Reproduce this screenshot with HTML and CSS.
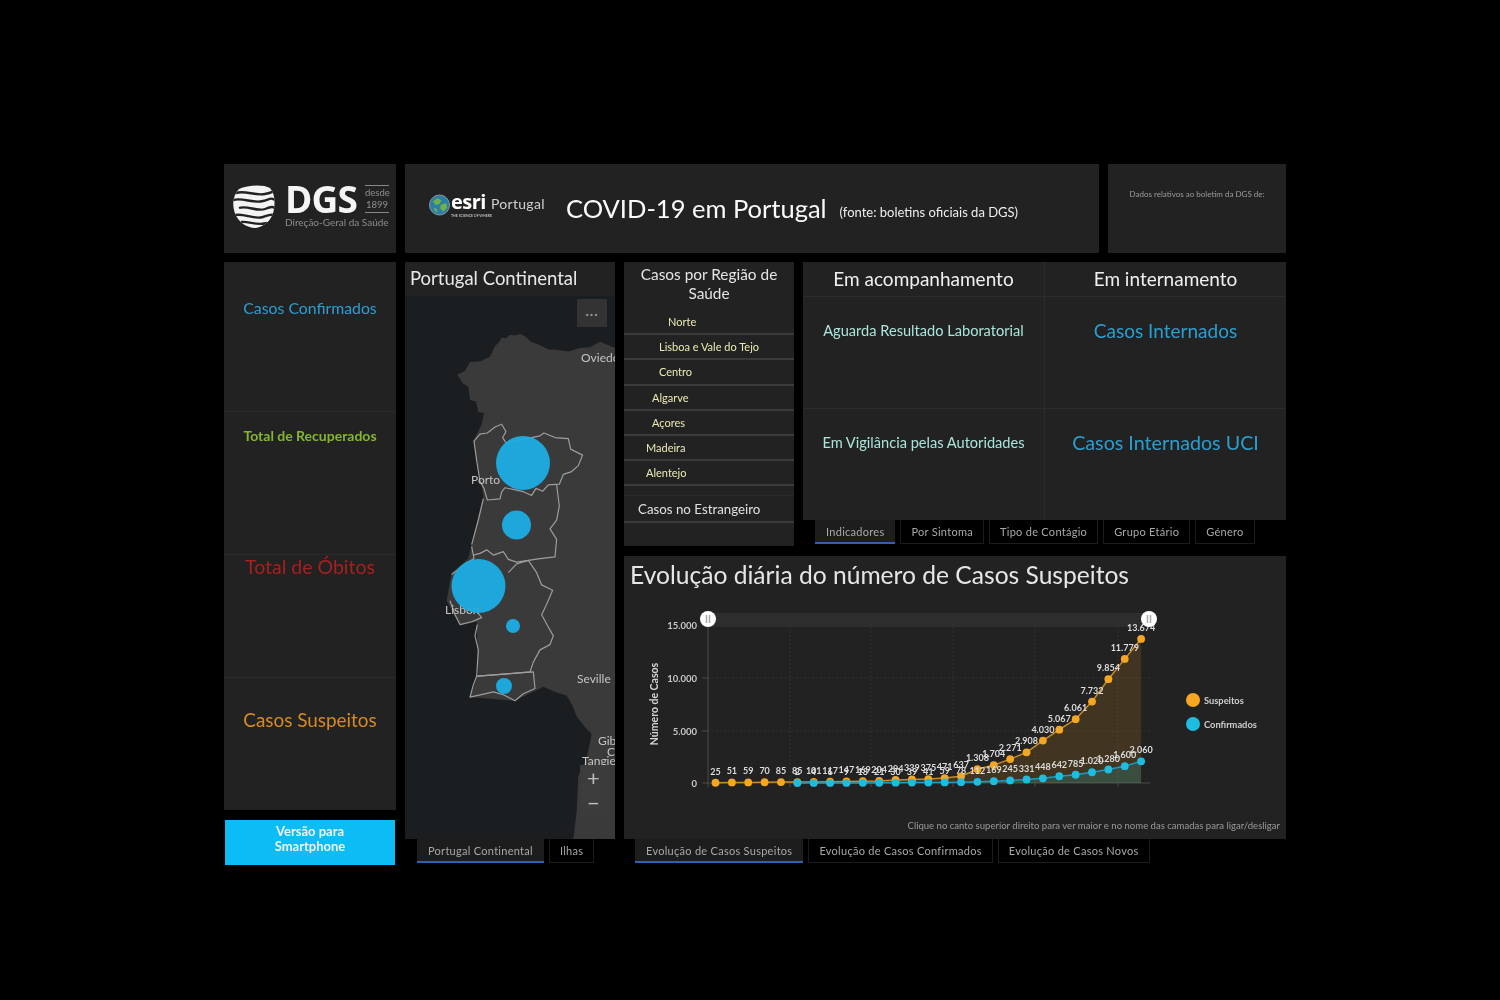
FILE: index.html
```html
<!DOCTYPE html>
<html lang="pt">
<head>
<meta charset="utf-8">
<title>COVID-19 em Portugal</title>
<link rel="stylesheet" href="styles.css">
</head>
<body>
<main class="dash">
  <section class="top-row">
    <div class="panel dgs">
      <svg class="dgs-globe" viewBox="0 0 42 43" aria-hidden="true">
        <defs><clipPath id="gc"><path d="M6 4C14 0 30-1 37 3 42 9 42 17 41 24 40 33 33 41 23 43 12 43 3 35 1 25-1 17 1 9 6 4Z"/></clipPath></defs>
        <g clip-path="url(#gc)">
          <rect width="42" height="43" fill="#f4f4f4"/>
          <path class="dgs-gap" d="M3 8C12 5 22 11 32 9S38 6 42 7"/>
          <path class="dgs-gap" d="M0 15C10 12 20 19 30 16S38 13 42 15"/>
          <path class="dgs-gap" d="M6 23C14 20 24 27 32 24S40 22 42 23"/>
          <path class="dgs-gap" d="M2 30C12 28 20 35 30 32S38 29 42 30"/>
          <path class="dgs-gap" d="M8 37C16 36 24 41 34 38"/>
        </g>
      </svg>
      <div class="dgs-text">
        <div class="dgs-main">
          <span class="dgs-name">DGS</span>
          <span class="dgs-since">desde<br>1899</span>
        </div>
        <div class="dgs-sub">Direção-Geral da Saúde</div>
      </div>
    </div>
    <header class="panel head">
      <div class="esri">
        <svg class="esri-globe" viewBox="0 0 22 22" aria-hidden="true">
          <circle cx="11" cy="11" r="10.500" fill="#2b7fa6" stroke="#8d9aa0" stroke-width="1"/>
          <path d="M4 7l5-3 4 2-2 4-4 1zM12 11l6-2 1 5-4 4-3-3zM5 14l3 1 1 4-3-2z" fill="#6fb04a"/>
        </svg>
        <div class="esri-word">
          <div class="esri-line"><span class="esri-name">esri</span><span class="esri-country">Portugal</span></div>
          <div class="esri-tag">THE SCIENCE OF WHERE</div>
        </div>
      </div>
      <h1 class="head-title">COVID-19 em Portugal</h1>
      <span class="head-source">(fonte: boletins oficiais da DGS)</span>
    </header>
    <div class="panel info">Dados relativos ao boletim da DGS de:</div>
  </section>

  <section class="main-row">
    <div class="col-kpi">
      <div class="panel kpis">
        <div class="kpi kpi-a"><span class="t-conf">Casos Confirmados</span></div>
        <div class="kpi kpi-b"><span class="t-rec">Total de Recuperados</span></div>
        <div class="kpi kpi-c"><span class="t-obi">Total de Óbitos</span></div>
        <div class="kpi kpi-d"><span class="t-sus">Casos Suspeitos</span></div>
      </div>
      <a class="phone-btn">Versão para Smartphone</a>
    </div>

    <div class="col-map">
      <div class="panel map-panel">
        <h2 class="map-title">Portugal Continental</h2>
        <div class="map">
          <svg class="map-svg" viewBox="405 296 210 543">
            <rect x="405" y="296" width="210" height="543" fill="#1b1e21"/>
            <g transform="translate(400 320) scale(.3333 .3509)">
              <path class="land" d="M300 60L305 50 318 52 330 42 345 44 362 40 380 50 392 62 420 72 445 84 470 85 505 90 540 80 570 78 600 62 625 72 660 85V1480H520L530 1400 535 1300 560 1250 575 1180 555 1160 530 1130 518 1100 500 1070 465 1060 430 1045 345 1085 210 1075 235 1010 230 860 180 870 140 800 155 720 205 680 215 640 250 500 245 470 220 345 245 298 252 265 235 262 228 232 210 228 205 190 188 180 172 155 195 145 210 120 240 118 270 105 285 75Z"/>
              <path class="region" d="M222 345L240 325 262 322 285 305 305 297 318 318 308 335 318 350 420 330 432 322 465 335 505 338 512 368 548 385 535 415 515 432 490 440 478 468 445 470 428 488 408 480 395 500 372 490 350 485 315 478 305 490 300 510 262 513 252 480 240 460 230 400Z"/>
              <path class="region" d="M250 510L235 570 215 640M470 470L478 530 470 570 450 595 470 625 465 675 420 680 385 685 350 690 325 682 310 660 280 670 260 655 240 665 220 670"/>
              <path class="region" d="M215 645L222 680 205 690 155 725M150 800L165 840 180 868 215 860 245 848 225 825"/>
              <path class="region" d="M325 720L350 695 385 685 410 720 425 755 458 770 440 810 425 840 442 870 460 900 450 925 420 940 400 975 390 1003 330 1008 230 1015 235 940 225 900 232 868"/>
              <path class="region" d="M230 1015L330 1008 400 1003 405 1050 370 1065 345 1085 310 1068 280 1060 210 1075 220 1040Z"/>
            </g>
            <text class="map-label" x="581" y="362">Oviedo</text>
            <text class="map-label" x="471" y="484">Porto</text>
            <text class="map-label" x="445" y="614">Lisbon</text>
            <text class="map-label" x="577" y="683">Seville</text>
            <text class="map-label" x="598" y="745">Gibraltar</text>
            <text class="map-label" x="607" y="756">Ceuta</text>
            <text class="map-label" x="582" y="765">Tangier</text>
            <circle class="bubble" cx="523" cy="463" r="27"/>
            <circle class="bubble" cx="516.500" cy="525" r="14.500"/>
            <circle class="bubble" cx="478.500" cy="586" r="27"/>
            <circle class="bubble" cx="513" cy="626" r="7"/>
            <circle class="bubble" cx="504" cy="686" r="8"/>
          </svg>
          <button class="map-more">···</button>
          <div class="map-zoom"><span>+</span><span>−</span></div>
        </div>
      </div>
      <nav class="tabs tabs-map">
        <span class="tab tab-on">Portugal Continental</span>
        <span class="tab">Ilhas</span>
      </nav>
    </div>

    <div class="col-right">
      <div class="upper">
        <div class="panel regions">
          <h2 class="regions-title">Casos por Região de Saúde</h2>
          <div class="reg reg-1">Norte</div>
          <div class="reg reg-2">Lisboa e Vale do Tejo</div>
          <div class="reg reg-2">Centro</div>
          <div class="reg reg-3">Algarve</div>
          <div class="reg reg-3">Açores</div>
          <div class="reg reg-4">Madeira</div>
          <div class="reg reg-4">Alentejo</div>
          <div class="reg-gap"></div>
          <div class="reg-abroad">Casos no Estrangeiro</div>
        </div>
        <div class="ind-col">
          <div class="panel ind">
            <div class="ind-head ind-l">Em acompanhamento</div>
            <div class="ind-head">Em internamento</div>
            <div class="ind-cell ind-l ind-b t-pale">Aguarda Resultado Laboratorial</div>
            <div class="ind-cell ind-b t-blue-m">Casos Internados</div>
            <div class="ind-cell ind-l t-pale">Em Vigilância pelas Autoridades</div>
            <div class="ind-cell t-blue-l">Casos Internados UCI</div>
          </div>
          <nav class="tabs tabs-ind">
            <span class="tab tab-on">Indicadores</span>
            <span class="tab">Por Sintoma</span>
            <span class="tab">Tipo de Contágio</span>
            <span class="tab">Grupo Etário</span>
            <span class="tab">Género</span>
          </nav>
        </div>
      </div>
      <div class="chart-col">
        <div class="panel chart">
          <h2 class="chart-title">Evolução diária do número de Casos Suspeitos</h2>
          <svg id="trend" class="chart-svg" viewBox="624 556 662 283"></svg>
        </div>
        <nav class="tabs tabs-chart">
          <span class="tab tab-on">Evolução de Casos Suspeitos</span>
          <span class="tab">Evolução de Casos Confirmados</span>
          <span class="tab">Evolução de Casos Novos</span>
        </nav>
      </div>
    </div>
  </section>
</main>
<script src="chart.js"></script>
</body>
</html>
```
FILE: styles.css
```css
* { box-sizing: border-box; }
html, body { margin: 0; height: 100%; background: #000; overflow: hidden; }
body { font-family: Lato, "Open Sans", sans-serif; color: #eee; }
h1, h2 { margin: 0; font-weight: 400; }

.dash { width: 1062px; margin: 164px 0 0 224px; display: flex; flex-direction: column; gap: 9px; filter: blur(.5px); }
.panel { background: #222; }

.top-row { display: flex; gap: 9px; height: 89px; }
.dgs { width: 172px; display: flex; align-items: flex-start; padding: 21px 0 0 9px; gap: 10px; }
.dgs-globe { width: 42px; height: 43px; flex: none; }
.dgs-gap { fill: none; stroke: #222; stroke-width: 2.400; }
.dgs-text { width: 104px; margin-top: -1px; }
.dgs-main { display: flex; align-items: center; justify-content: space-between; height: 30px; }
.dgs-name { font: 700 37px/30px "Open Sans", sans-serif; color: #f5f5f5; letter-spacing: -.8px; }
.dgs-since { width: 24px; border-top: 1px solid #888; border-bottom: 1px solid #888; font-size: 9.500px; line-height: 12px; color: #8f8f8f; text-align: center; padding: 1px 0; }
.dgs-sub { font-size: 10px; line-height: 12px; margin-top: 2px; color: #8c8c8c; white-space: nowrap; }

.head { width: 694px; display: flex; align-items: center; padding-left: 24px; }
.esri { display: flex; align-items: center; gap: 1px; width: 137px; margin-top: -7px; }
.esri-globe { width: 21px; height: 22px; flex: none; }
.esri-line { display: flex; align-items: baseline; gap: 5px; line-height: 20px; }
.esri-name { font: 700 20px/20px "Open Sans", sans-serif; color: #fff; letter-spacing: -.5px; }
.esri-country { font-size: 14px; color: #d0d0d0; letter-spacing: .3px; }
.esri-tag { font-size: 3.500px; line-height: 4px; font-weight: 700; color: #bbb; }
.head-title { font-size: 25.500px; color: #fafafa; margin-top: -2px; white-space: nowrap; }
.head-source { font-size: 13px; color: #eee; margin: 6px 0 0 13px; white-space: nowrap; }
.info { flex: 1; text-align: center; font-size: 8px; color: #9c9c9c; padding-top: 25px; white-space: nowrap; }

.main-row { display: flex; gap: 9px; }
.col-kpi { width: 172px; display: flex; flex-direction: column; gap: 10px; }
.kpis { height: 548px; display: flex; flex-direction: column; }
.kpi { display: flex; justify-content: center; white-space: nowrap; border-bottom: 1px solid #2b2b2b; }
.kpi-a { height: 150px; padding-top: 35px; }
.kpi-b { height: 143px; padding-top: 15px; }
.kpi-c { height: 123px; padding-top: 0; }
.kpi-d { flex: 1; padding-top: 30px; border-bottom: 0; }
.t-conf { font-size: 15.800px; line-height: 22px; color: #2b9fd3; }
.t-rec { font-size: 14px; line-height: 18px; color: #84b62e; font-weight: 700; }
.t-obi { font-size: 19.500px; line-height: 24px; color: #a81f1f; }
.t-sus { font-size: 18.900px; line-height: 24px; color: #d68a24; }
.phone-btn { height: 45px; margin: 0 1px; background: #0cbcf4; color: #f2f2f2; font-size: 13px; font-weight: 700; line-height: 15px; text-align: center; padding: 4px 40px; }

.col-map { width: 210px; }
.map-panel { height: 577px; display: flex; flex-direction: column; }
.map-title { height: 34px; font-size: 18.500px; line-height: 32px; padding-left: 5px; color: #e8e8e8; white-space: nowrap; }
.map { position: relative; flex: 1; min-height: 0; }
.map-svg { display: block; width: 210px; height: 543px; }
.land { fill: #3a3a3a; }
.region { fill: none; stroke: #9e9e9e; stroke-width: 3.500; stroke-linejoin: round; }
.bubble { fill: #1badE3; fill-opacity: .95; }
.map-label { font-size: 12px; fill: #c4c4c4; }
.map-more { position: absolute; top: 3px; left: 172px; width: 30px; height: 28px; border: 0; padding: 0; background: #333; color: #999; font: 700 12px Lato, sans-serif; letter-spacing: 1px; }
.map-zoom { position: absolute; top: 469px; left: 175px; width: 27px; height: 50px; display: flex; flex-direction: column; background: #3c3c3c; color: #bdbdbd; font-size: 22px; line-height: 25px; text-align: center; }

.col-right { width: 662px; display: flex; flex-direction: column; gap: 10px; }
.upper { display: flex; gap: 9px; height: 284px; }
.regions { width: 170px; display: flex; flex-direction: column; }
.regions-title { height: 48px; padding: 3px 10px 0; font-size: 15.400px; line-height: 19px; text-align: center; color: #e4e4e4; }
.reg { height: 25.200px; flex: none; border-bottom: 2px solid #3a3a3a; font-size: 11px; line-height: 23px; color: #ecebb4; white-space: nowrap; }
.reg-1 { padding-left: 44px; }
.reg-2 { padding-left: 35px; }
.reg-3 { padding-left: 28px; }
.reg-4 { padding-left: 22px; }
.reg-gap { height: 10px; border-bottom: 1px solid #2a2a2a; }
.reg-abroad { height: 27px; padding-left: 14px; font-size: 13.300px; line-height: 27px; color: #e0e0e0; border-bottom: 2px solid #3a3a3a; white-space: nowrap; }

.ind-col { flex: 1; }
.ind { height: 258px; display: grid; grid-template-columns: 242px 1fr; grid-template-rows: 35px 112px 111px; }
.ind-head { display: flex; align-items: center; justify-content: center; font-size: 19px; color: #f0f0f0; border-bottom: 1px solid #2c2c2c; padding-bottom: 2px; }
.ind-l { border-right: 1px solid #2c2c2c; }
.ind-cell { text-align: center; padding-top: 22px; white-space: nowrap; }
.ind-b { border-bottom: 1px solid #2c2c2c; }
.t-pale { font-size: 14.600px; line-height: 24px; color: #a9e5da; }
.t-blue-m { font-size: 19px; line-height: 24px; color: #2a9fcf; }
.t-blue-l { font-size: 19.700px; line-height: 24px; color: #2a9fcf; }

.tabs { display: flex; gap: 5px; height: 25px; font-size: 11px; letter-spacing: .28px; white-space: nowrap; }
.tab { display: flex; align-items: center; padding: 0 10px; height: 24px; color: #a8a8a8; border: 1px solid #1c1c1c; border-top: 0; }
.tab-on { background: #1d1d1d; border: 0; border-bottom: 2px solid #2f62ad; padding: 0 11px; }
.tabs-map { padding-left: 12px; }
.tabs-ind { padding-left: 12px; }
.tabs-chart { padding-left: 11px; }

.chart { position: relative; height: 283px; }
.chart-title { position: absolute; top: 4px; left: 6px; font-size: 24.600px; line-height: 30px; color: #e6e6e6; white-space: nowrap; }
.chart-svg { display: block; width: 662px; height: 283px; }
.scroll-band { fill: #2d2d2d; }
.plot-axis { stroke: #4a4a4a; stroke-width: 1; }
.plot-grid { stroke: #303030; stroke-width: 1; stroke-dasharray: 2 2; }
.tick-label { font-size: 9.500px; fill: #c8c8c8; text-anchor: end; font-weight: 700; }
.axis-title { font-size: 10.500px; font-weight: 700; fill: #d4d4d4; text-anchor: middle; }
.area-s { fill: #f5a623; fill-opacity: .15; }
.area-c { fill: #1cc4d8; fill-opacity: .17; }
.line-s { fill: none; stroke: #c78d2a; stroke-width: 1.500; }
.line-c { fill: none; stroke: #1a9cc4; stroke-width: 1.500; }
.dot-s { fill: #f5a623; }
.dot-c { fill: #1cbde0; }
.pt-label { font-size: 9px; fill: #dcdcdc; text-anchor: middle; font-weight: 700; }
.handle { fill: #fff; }
.handle-bar { stroke: #aaa; stroke-width: 1.500; }
.legend-label { font-size: 9.300px; fill: #cfcfcf; font-weight: 700; }
.note { font-size: 9.550px; fill: #999; text-anchor: end; }
```
FILE: chart.js
```js
(function () {
  var NS = 'http://www.w3.org/2000/svg';
  var svg = document.getElementById('trend');
  var X0 = 715.5, DX = 16.37, Y0 = 783, SCALE = 158 / 15000;

  var suspects = [25, 51, 59, 70, 85, 85, 101, 117, 147, 169, 204, 294, 339, 375, 471, 637,
    1308, 1704, 2271, 2908, 4030, 5067, 6061, 7732, 9854, 11779, 13674];
  var confirmed = [2, 4, 6, 9, 13, 21, 30, 39, 41, 59, 78, 112, 169, 245, 331, 448, 642, 785,
    1020, 1280, 1600, 2060];
  var FIRST_CONFIRMED = 5;

  function el(name, attrs, text) {
    var n = document.createElementNS(NS, name);
    Object.keys(attrs).forEach(function (k) { n.setAttribute(k, attrs[k]); });
    if (text !== undefined) n.textContent = text;
    svg.appendChild(n);
    return n;
  }
  function fmt(v) { return String(v).replace(/\B(?=(\d{3})+$)/g, '.'); }
  function px(i) { return X0 + i * DX; }
  function py(v) { return Y0 - v * SCALE; }

  el('rect', { 'class': 'scroll-band', x: 708, y: 613, width: 442, height: 14 });

  [790, 871, 953, 1035, 1118].forEach(function (x) {
    el('line', { 'class': 'plot-grid', x1: x, x2: x, y1: 627, y2: 783 });
    el('line', { 'class': 'plot-axis', x1: x, x2: x, y1: 783, y2: 787 });
  });
  [[15000, 625], [10000, 678], [5000, 731], [0, 783]].forEach(function (t) {
    if (t[0] > 0 && t[0] < 15000) el('line', { 'class': 'plot-grid', x1: 708, x2: 1150, y1: t[1], y2: t[1] });
    el('line', { 'class': 'plot-axis', x1: 702, x2: 708, y1: t[1], y2: t[1] });
    el('text', { 'class': 'tick-label', x: 697, y: t[1] + 3.500 }, fmt(t[0]));
  });
  el('line', { 'class': 'plot-axis', x1: 708, x2: 708, y1: 619, y2: 787 });
  el('line', { 'class': 'plot-axis', x1: 708, x2: 1150, y1: 783, y2: 783 });
  el('text', { 'class': 'axis-title', x: 0, y: 0, transform: 'translate(658 704) rotate(-90)' }, 'Número de Casos');

  function series(values, first, cls) {
    var pts = values.map(function (v, i) { return px(i + first).toFixed(1) + ' ' + py(v).toFixed(1); });
    var lastX = px(first + values.length - 1).toFixed(1), firstX = px(first).toFixed(1);
    el('path', { 'class': 'area-' + cls, d: 'M' + firstX + ' ' + Y0 + 'L' + pts.join('L') + 'L' + lastX + ' ' + Y0 + 'Z' });
    el('path', { 'class': 'line-' + cls, d: 'M' + pts.join('L') });
  }
  function dots(values, first, cls) {
    values.forEach(function (v, i) {
      el('circle', { 'class': 'dot-' + cls, cx: px(i + first), cy: py(v), r: 3.900 });
    });
  }
  function labels(values, first) {
    values.forEach(function (v, i) {
      el('text', { 'class': 'pt-label', x: px(i + first), y: py(v) - 8 }, fmt(v));
    });
  }

  series(suspects, 0, 's');
  series(confirmed, FIRST_CONFIRMED, 'c');
  dots(suspects, 0, 's');
  dots(confirmed, FIRST_CONFIRMED, 'c');
  labels(suspects, 0);
  labels(confirmed, FIRST_CONFIRMED);

  [708, 1149].forEach(function (x) {
    el('circle', { 'class': 'handle', cx: x, cy: 619, r: 8 });
    el('line', { 'class': 'handle-bar', x1: x - 1.500, x2: x - 1.500, y1: 615, y2: 623 });
    el('line', { 'class': 'handle-bar', x1: x + 1.500, x2: x + 1.500, y1: 615, y2: 623 });
  });

  el('circle', { 'class': 'dot-s', cx: 1193, cy: 700, r: 7 });
  el('text', { 'class': 'legend-label', x: 1204, y: 704 }, 'Suspeitos');
  el('circle', { 'class': 'dot-c', cx: 1193, cy: 724, r: 7 });
  el('text', { 'class': 'legend-label', x: 1204, y: 728 }, 'Confirmados');

  el('text', { 'class': 'note', x: 1280, y: 829 }, 'Clique no canto superior direito para ver maior e no nome das camadas para ligar/desligar');
})();
```
